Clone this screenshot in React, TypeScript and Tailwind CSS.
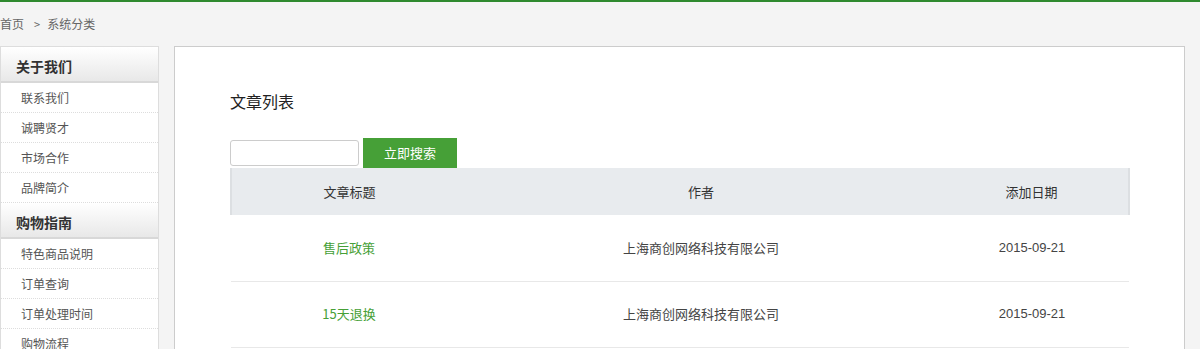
import React from 'react'

const groups = [
  { title: '关于我们', items: ['联系我们', '诚聘贤才', '市场合作', '品牌简介'] },
  { title: '购物指南', items: ['特色商品说明', '订单查询', '订单处理时间', '购物流程'] },
]

const rows = [
  { title: '售后政策', author: '上海商创网络科技有限公司', date: '2015-09-21' },
  { title: '15天退换', author: '上海商创网络科技有限公司', date: '2015-09-21' },
]

export default function App() {
  return (
    <div
      className="min-h-[349px] bg-[#f4f4f4] border-t-2 border-[#2f8a2f] text-[12px] text-[#555]"
      style={{ fontFamily: '"Microsoft YaHei", "Noto Sans CJK SC", sans-serif' }}
    >
      {/* 面包屑 */}
      <div className="h-[44px] flex items-center text-[12px] text-[#666]">
        <span>首页</span>
        <span className="ml-[10px] mr-[7px] text-[11px]">&gt;</span>
        <span>系统分类</span>
      </div>

      <div className="flex items-start gap-[15px]">
        {/* 侧栏 */}
        <div className="w-[159px] shrink-0 bg-white border border-[#ddd]">
          {groups.map((g) => (
            <div key={g.title}>
              <div className="h-[36px] flex items-center pt-[4px] pl-[15px] text-[14px] font-bold text-[#333] bg-gradient-to-b from-white to-[#e8e8e8] border-b-2 border-[#d8d8d8]">
                {g.title}
              </div>
              {g.items.map((it) => (
                <div
                  key={it}
                  className="h-[30px] flex items-center pl-[20px] border-b border-dotted border-[#ddd] text-[#555]"
                >
                  {it}
                </div>
              ))}
            </div>
          ))}
        </div>

        {/* 内容 */}
        <div className="w-[1011px] shrink-0 bg-white border border-[#ccc] h-[320px] px-[55px] pt-[42px]">
          <h2 className="text-[16px] text-[#222] leading-[24px]">文章列表</h2>

          <div className="flex items-end mt-[25px]">
            <input className="w-[129px] h-[26px] border border-[#ccc] rounded-[3px] mb-[2px] outline-none" />
            <button className="ml-[4px] w-[94px] h-[30px] bg-[#46a037] text-white text-[13px]">立即搜索</button>
          </div>

          <table className="w-[898px] border-collapse table-fixed text-[13px]">
            <colgroup>
              <col className="w-[236px]" />
              <col className="w-[468px]" />
              <col className="w-[194px]" />
            </colgroup>
            <thead>
              <tr className="h-[47px] bg-[#e8ebee] text-[#333]">
                <th className="font-normal border-l-2 border-[#dcdfe2]">文章标题</th>
                <th className="font-normal">作者</th>
                <th className="font-normal border-r-2 border-[#dcdfe2]">添加日期</th>
              </tr>
            </thead>
            <tbody>
              {rows.map((r) => (
                <tr key={r.title} className="h-[66px] border-b border-[#e8e8e8]">
                  <td className="text-center text-[#46a037]">{r.title}</td>
                  <td className="text-center text-[#444]">{r.author}</td>
                  <td
                    className="text-center text-[#444]"
                    style={{ fontFamily: 'Arial, "Liberation Sans", sans-serif' }}
                  >
                    {r.date}
                  </td>
                </tr>
              ))}
            </tbody>
          </table>
        </div>
      </div>
    </div>
  )
}
